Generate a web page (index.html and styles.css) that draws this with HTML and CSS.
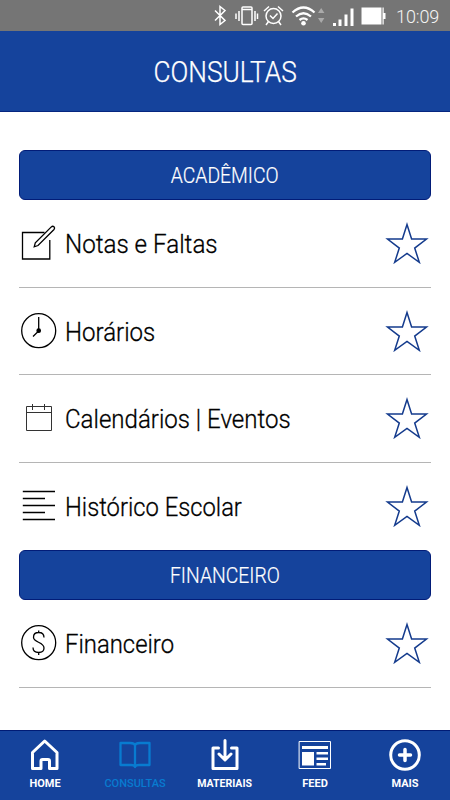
FILE: index.html
```html
<!DOCTYPE html>
<html lang="pt-BR">
<head>
<meta charset="utf-8">
<title>Consultas</title>
<link rel="stylesheet" href="styles.css">
</head>
<body>
<svg class="defs" width="0" height="0"><symbol id="star" viewBox="0 0 44 42"><path d="M22 2.500 26.600 17.100H41.500L29.700 26.100 34.300 40.300 22 31.500 9.700 40.300 14.300 26.100 2.500 17.100H17.400Z"/></symbol></svg>
<div class="screen">
  <div class="status">
    <svg class="status-icons" viewBox="0 0 190 31" width="190" height="31">
      <g fill="none" stroke="#fff" stroke-width="1.5">
        <path d="M15 10.500 25 20.500 20 24.500V6.500L25 10.500 15 20.500"/>
        <rect x="42" y="7" width="10" height="17.500" rx="1"/><path d="M42 9.500H52M39 11V21M55 11V21M36 13.500V19M57.500 13.500V19"/>
        <circle cx="73.500" cy="16" r="7.500"/><path d="M70 15.500 73 18.500 77.500 13.500M64 11 69 6.500M78 6.500 83 11M68.500 21.500 66 25M78.500 21.500 81 25"/>
        <path stroke-width="2.300" d="M92.500 12.500Q103.500 2.500 114.500 12.500M96 16.500Q103.500 10 111 16.500M99.500 20Q103.500 16.700 107.500 20"/>
      </g>
      <circle cx="103.500" cy="23.300" r="2.300" fill="#fff"/>
      <path d="M118 13 121.200 8 124.400 13ZM118 18 121.200 23 124.400 18Z" fill="#aaa"/>
      <path d="M133 23H136V26H133ZM138.500 19.500H141.500V26H138.500ZM144.500 14.500H147.500V26H144.500ZM150.500 8.500H153.500V26H150.500Z" fill="#fff"/>
      <path d="M161.500 7.500H181.500V24.500H161.500ZM182.500 7.500H183.700V13H185.500V19H183.700V24.500H182.500Z" fill="#fff"/>
    </svg>
    <span class="time">10:09</span>
  </div>
  <header class="header"><h1><span class="fit title">CONSULTAS</span></h1></header>
  <main class="content">
    <h2 class="banner"><span class="fit academic">ACADÊMICO</span></h2>
    <div class="row">
      <svg class="icon" viewBox="0 0 40 40"><path d="M30.800 17V36H3.500V9.500H25.500"/><path d="M15.200 23.800 16.300 19.800 32.300 3.900Q33.700 2.700 35 3.800 36.200 5.100 35 6.500L19 22.500Z"/></svg>
      <span class="label"><span class="fit notes">Notas e Faltas</span></span><svg class="star"><use href="#star"/></svg>
    </div>
    <div class="row">
      <svg class="icon" viewBox="0 0 40 40"><circle cx="19.700" cy="19.700" r="17"/><path d="M19.700 6V20L14 25.500"/><circle cx="19.700" cy="19.700" r="1.700" fill="#000"/></svg>
      <span class="label"><span class="fit hours">Horários</span></span><svg class="star"><use href="#star"/></svg>
    </div>
    <div class="row">
      <svg class="icon calendar" viewBox="0 0 40 40"><path d="M7.500 8.500H32.500V32.500H7.500ZM7.500 14.500H32.500M13.500 6V12M25.500 6V12"/></svg>
      <span class="label"><span class="fit events">Calendários | Eventos</span></span><svg class="star"><use href="#star"/></svg>
    </div>
    <div class="row plain">
      <svg class="icon" viewBox="0 0 40 40"><path d="M3.800 5.500H36M3.800 12.500H26M3.800 19.500H36M3.800 26.500H26M3.800 33.500H36"/></svg>
      <span class="label"><span class="fit history">Histórico Escolar</span></span><svg class="star"><use href="#star"/></svg>
    </div>
    <h2 class="banner"><span class="fit financial">FINANCEIRO</span></h2>
    <div class="row">
      <svg class="icon" viewBox="0 0 40 40"><circle cx="19.700" cy="19.700" r="17"/><path d="M25 14.500C25 11 22.800 9.500 19.700 9.500S14.500 11.500 14.500 14.300C14.500 20 25 18.500 25 25 25 28 22.500 29.500 19.700 29.500S14 28 14 24.500M19.700 7.500V9.500M19.700 29.500V32"/></svg>
      <span class="label"><span class="fit finance">Financeiro</span></span><svg class="star"><use href="#star"/></svg>
    </div>
  </main>
  <nav class="tabs">
    <a class="tab"><svg viewBox="0 0 36 36"><path d="M5.500 15.500 17.700 4 30 15.500V31.500H22.500V24Q22.500 22.500 21 22.500H15.500Q14 22.500 14 24V31.500H5.500Z"/></svg><span class="fit">HOME</span></a>
    <a class="tab active"><svg viewBox="0 0 36 36"><path d="M3.500 6H13Q18 6 18 9 18 6 23 6H32.500V28H22Q18.500 28 18 30 17.500 28 14 28H3.500ZM18 9V30"/></svg><span class="fit">CONSULTAS</span></a>
    <a class="tab"><svg viewBox="0 0 36 36"><path d="M11.500 11H6V31.500H30V11H24.500M18 3.500V22.500M12 17 18 23 24 17"/></svg><span class="fit materials">MATERIAIS</span></a>
    <a class="tab"><svg viewBox="0 0 36 36"><rect x="2.500" y="4.500" width="31" height="27" stroke-width="1"/><path d="M5 9H31V12H5ZM5 15H17V28.500H5ZM19.500 15H31V17.500H19.500ZM19.500 20.500H31V23H19.500ZM19.500 26H29V28.500H19.500Z" fill="#fff" stroke="none"/></svg><span class="fit">FEED</span></a>
    <a class="tab"><svg viewBox="0 0 36 36"><circle cx="18" cy="18" r="14.300"/><path d="M18 12.500V23.500M12.500 18H23.500" stroke-width="3.500"/></svg><span class="fit">MAIS</span></a>
  </nav>
</div>
</body>
</html>
```
FILE: styles.css
```css
* { box-sizing: border-box; }
body { margin: 0; background: #fff; font-family: Roboto, sans-serif; }
.defs { display: block; width: 0; height: 0; }
.screen { width: 450px; height: 800px; display: flex; flex-direction: column; overflow: hidden; }
.status { height: 31px; background: #757575; display: flex; justify-content: flex-end; align-items: center; padding-right: 11px; color: #f4f4f4; }
.status-icons { margin-right: 6px; }
.time { width: 43px; font-size: 18px; font-weight: 300; white-space: nowrap; line-height: 31px; padding-top: 2px; letter-spacing: -.1px; }
.header { height: 81px; background: #15439c; border-bottom: 1px solid #06267f; display: flex; align-items: center; justify-content: center; color: #fff; }
h1, h2 { margin: 0; font-weight: 300; }
h1 { font-size: 29px; padding-top: 2px; -webkit-text-stroke: .25px #fff; }
.fit { display: inline-block; white-space: nowrap; }
.content { flex: 1; padding: 38px 19px 0; }
.banner { height: 50px; background: #15439c; border: 1px solid #021c78; border-radius: 6px; color: #fff; display: flex; align-items: center; justify-content: center; font-size: 22.5px; -webkit-text-stroke: .2px #fff; }
.row { height: 87.5px; border-bottom: 1px solid #b5b5b5; display: flex; align-items: center; }
.plain { border-bottom-color: transparent; }
.icon { width: 40px; height: 40px; fill: none; stroke: #000; stroke-width: 1.3; flex: none; }
.calendar { stroke: #333; stroke-width: 1; }
.label { flex: 1; padding: 2px 0 0 6px; font-size: 26px; font-weight: 300; color: #000; -webkit-text-stroke: .3px #000; }
.label .fit { transform-origin: left; }
.star { width: 44px; height: 42px; margin-right: 2px; fill: none; stroke: #143b8d; stroke-width: 1.5; }
.title { transform: scaleX(.905); }
.academic, .financial { transform: scaleX(.86); }
.notes { transform: scaleX(.93); }
.hours, .events { transform: scaleX(.925); }
.history { transform: scaleX(.914); }
.finance { transform: scaleX(.918); }
.tabs { height: 70px; background: #15439c; border-top: 1px solid #001b75; display: grid; grid-template-columns: repeat(5, 1fr); }
.tab { display: flex; flex-direction: column; align-items: center; padding-top: 6px; color: #fff; font-size: 11px; font-weight: 700; line-height: 14px; }
.tab svg { width: 36px; height: 36px; margin-bottom: 4px; fill: none; stroke: currentColor; stroke-width: 3; stroke-linejoin: round; stroke-linecap: round; }
.materials { transform: scaleX(.96); }
.active { color: #087bd0; font-weight: 500; }
.active svg { stroke-width: 2.3; }
```
